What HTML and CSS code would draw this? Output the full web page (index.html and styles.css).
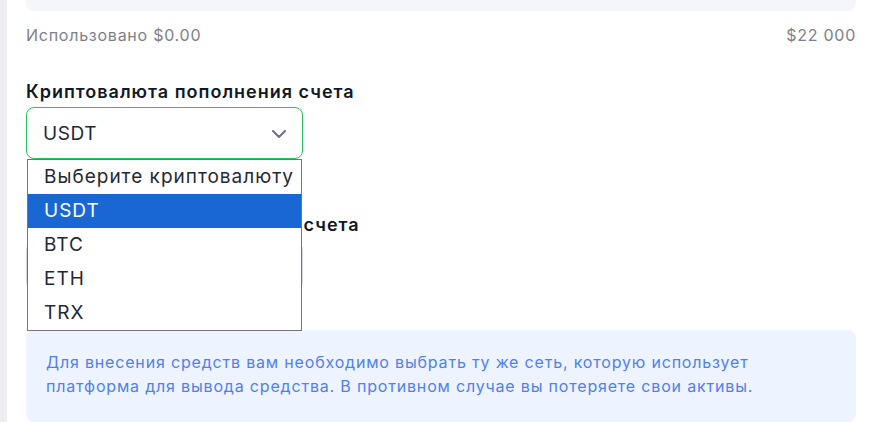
FILE: index.html
```html
<!DOCTYPE html>
<html lang="ru">
<head>
<meta charset="utf-8">
<link rel="stylesheet" href="styles.css">
</head>
<body>
<div class="page">
  <div class="side"></div>
  <main class="main">
    <div class="topbox"></div>
    <div class="usage">
      <span>Использовано $0.00</span>
      <span>$22 000</span>
    </div>
    <div class="field first">
      <div class="label">Криптовалюта пополнения счета</div>
      <div class="select-wrap">
        <div class="select active">
          <span>USDT</span>
          <svg class="chev" width="14" height="8" viewBox="0 0 14 8"><path d="M1 1 L7 7 L13 1" fill="none" stroke="#6b7280" stroke-width="2" stroke-linecap="round" stroke-linejoin="round"/></svg>
        </div>
        <ul class="dropdown">
          <li>Выберите криптовалюту</li>
          <li class="sel">USDT</li>
          <li>BTC</li>
          <li>ETH</li>
          <li>TRX</li>
        </ul>
      </div>
    </div>
    <div class="field second">
      <div class="label">Сеть криптовалюты для счета</div>
      <div class="select plain"></div>
    </div>
    <div class="info">
      <p class="info-text">Для внесения средств вам необходимо выбрать ту же сеть, которую использует платформа для вывода средства. В противном случае вы потеряете свои активы.</p>
    </div>
  </main>
</div>
</body>
</html>
```

FILE: styles.css
```css
* { box-sizing: border-box; }
html, body { margin: 0; padding: 0; background: #fff; }
body { font-family: Inter, "Noto Sans", sans-serif; overflow: hidden; }
.page { display: flex; height: 422px; }
.side { width: 7px; background: #eceef2; flex: none; }
.main { flex: 1; padding: 0 14px 0 19px; display: flex; flex-direction: column; }
.topbox { height: 11px; background: #f5f6f9; border-radius: 0 0 8px 8px; }
.usage { margin-top: 12px; display: flex; justify-content: space-between; font-size: 16px; line-height: 24px; letter-spacing: 0.75px; color: #7d8189; }
.field .label { font-size: 18px; font-weight: 600; line-height: 24px; letter-spacing: 1px; color: #111827; }
.first { margin-top: 33px; }
.select-wrap { position: relative; margin-top: 3px; width: 277px; }
.select { height: 52px; border-radius: 8px; display: flex; align-items: center; justify-content: space-between; padding: 0 16px 0 16px; font-size: 19px; letter-spacing: 0.6px; color: #1f2937; }
.select.active { border: 1px solid #22c55e; }
.chev { display: block; margin-top: 1px; }
.dropdown { position: absolute; left: 1px; right: 1px; top: 52px; margin: 0; padding: 0; list-style: none; background: #fff; border: 1px solid #767676; z-index: 5; }
.dropdown li { height: 34px; line-height: 34px; padding-left: 16px; font-size: 19px; letter-spacing: 1px; color: #1f2937; }
.dropdown li.sel { background: #1967d2; color: #fff; }
.second { margin-top: 54px; }
.second .label { margin-left: 33px; }
.select.plain { margin-top: 5px; width: 277px; height: 48px; border: 1px solid #d1d5db; }
.info { margin-top: 40px; background: #eef4ff; border-radius: 8px; padding: 20px 20px 24px 20px; }
.info-text { margin: 0; max-width: 770px; font-size: 16px; line-height: 24px; letter-spacing: 0.82px; color: #4f7ff0; }
```
